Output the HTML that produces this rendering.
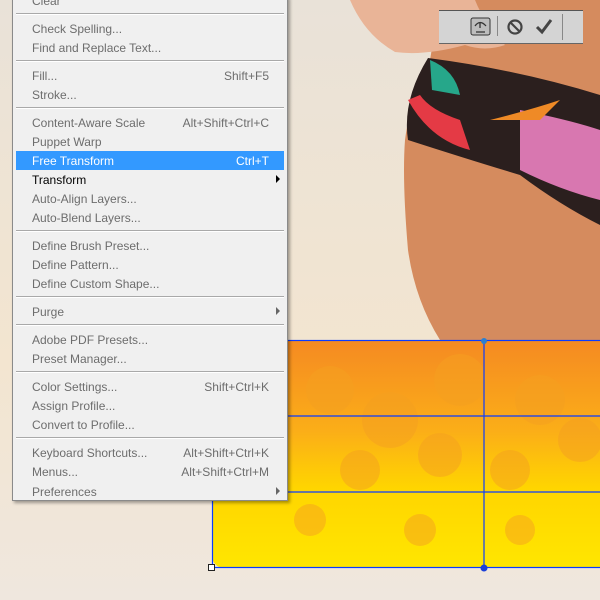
<!DOCTYPE html>
<html><head><meta charset="utf-8"><style>
body{margin:0;width:600px;height:600px;overflow:hidden;position:relative;background:#ede3d6;font-family:"Liberation Sans",sans-serif}
#menu{position:absolute;left:12px;top:-4px;width:274px;height:503px;background:#f0f0f0;border:1px solid #8a8a8a;box-shadow:2px 2px 3px rgba(0,0,0,.35)}
.i{position:absolute;left:19px;font-size:12px;color:#6d6d6d;white-space:nowrap;line-height:14px}
.k{position:absolute;right:18px;font-size:12px;color:#6d6d6d;line-height:14px}
.s{position:absolute;left:3px;right:3px;height:1px;background:#a9a9a9;border-bottom:1px solid #fff}
.ar{position:absolute;right:7px;width:0;height:0;border-left:4px solid #666;border-top:4px solid transparent;border-bottom:4px solid transparent}
</style></head><body>
<svg width="600" height="600" style="position:absolute;left:0;top:0">
<defs>
<linearGradient id="bg" x1="0" y1="0" x2="0" y2="1"><stop offset="0" stop-color="#e9e2d8"/><stop offset=".6" stop-color="#f3e5d0"/><stop offset="1" stop-color="#efe7de"/></linearGradient>
<linearGradient id="yl" x1="0" y1="0" x2="0" y2="1"><stop offset="0" stop-color="#f58a22"/><stop offset=".4" stop-color="#fbae18"/><stop offset=".65" stop-color="#ffd500"/><stop offset="1" stop-color="#ffe600"/></linearGradient>
</defs>
<rect width="600" height="600" fill="url(#bg)"/>
<path d="M440 0H600V340H440Q415 300 408 250Q402 180 405 140Q410 100 430 60Z" fill="#d58b5e"/>
<path d="M350 0H475Q485 25 505 45Q485 52 465 45Q425 56 395 52Q365 35 350 0Z" fill="#e9b497"/>
<path d="M428 58Q520 70 600 95V225Q560 205 520 175Q470 160 408 140Q402 100 428 58Z" fill="#2b1f1e"/>
<path d="M408 100Q430 140 470 150L460 120Q430 110 420 95Z" fill="#e43a45"/>
<path d="M520 110Q570 120 600 130V200Q560 190 520 170Z" fill="#d877b0"/>
<path d="M430 60Q455 70 460 95L432 90Z" fill="#26a78a"/>
<path d="M490 120Q530 110 560 100L540 120Z" fill="#ef8a26"/>
<rect x="212" y="340" width="420" height="228" rx="12" fill="url(#yl)"/>
<g fill="#f5a020" opacity=".5">
<circle cx="330" cy="390" r="24"/><circle cx="390" cy="420" r="28"/><circle cx="460" cy="380" r="26"/><circle cx="540" cy="400" r="25"/><circle cx="580" cy="440" r="22"/><circle cx="360" cy="470" r="20"/><circle cx="440" cy="455" r="22"/><circle cx="510" cy="470" r="20"/><circle cx="260" cy="480" r="18"/><circle cx="310" cy="520" r="16"/><circle cx="420" cy="530" r="16"/><circle cx="520" cy="530" r="15"/></g>
<g stroke="#0a3cff" stroke-width="1.2" fill="none"><rect x="212.5" y="340.5" width="400" height="227"/><line x1="212" y1="416" x2="600" y2="416"/><line x1="212" y1="492" x2="600" y2="492"/><line x1="484" y1="340" x2="484" y2="568"/></g>
<rect x="208.5" y="564.5" width="6" height="6" fill="#fff" stroke="#222"/>
<circle cx="484" cy="568" r="3.5" fill="#1a3fd8"/><circle cx="484" cy="341" r="3" fill="#2a7fd0"/>
<rect x="439" y="10" width="144" height="34" fill="#d4d4d4"/>
<line x1="439" y1="10.5" x2="583" y2="10.5" stroke="#555"/><line x1="439" y1="43.5" x2="583" y2="43.5" stroke="#666"/>
<rect x="471" y="18" width="19" height="17" rx="2" fill="#bdbdbd" stroke="#333"/>
<path d="M475 26Q480 19 486 26M480 22V28M476 32H485" stroke="#333" fill="none" stroke-width="1.3"/>
<line x1="497.5" y1="16" x2="497.5" y2="36" stroke="#888"/><line x1="562.5" y1="14" x2="562.5" y2="40" stroke="#888"/>
<circle cx="515" cy="27" r="6.5" fill="none" stroke="#444" stroke-width="2.2"/><line x1="510.5" y1="22.5" x2="519.5" y2="31.5" stroke="#444" stroke-width="2.2"/>
<path d="M537 27L542 32L551 20" stroke="#444" stroke-width="3" fill="none"/>
</svg>
<div id="menu">
<div class="i" style="top:-3px">Clear</div>
<div class="s" style="top:16px"></div>
<div class="i" style="top:25px">Check Spelling...</div>
<div class="i" style="top:44px">Find and Replace Text...</div>
<div class="s" style="top:63px"></div>
<div class="i" style="top:72px">Fill...</div><div class="k" style="top:72px">Shift+F5</div>
<div class="i" style="top:91px">Stroke...</div>
<div class="s" style="top:110px"></div>
<div class="i" style="top:119px">Content-Aware Scale</div><div class="k" style="top:119px">Alt+Shift+Ctrl+C</div>
<div class="i" style="top:138px">Puppet Warp</div>
<div style="position:absolute;left:3px;right:3px;top:154px;height:19px;background:#3399ff"></div>
<div class="i" style="top:157px;color:#fff">Free Transform</div><div class="k" style="top:157px;color:#fff">Ctrl+T</div>
<div class="i" style="top:176px;color:#000">Transform</div><div class="ar" style="top:178px;border-left-color:#000"></div>
<div class="i" style="top:195px">Auto-Align Layers...</div>
<div class="i" style="top:214px">Auto-Blend Layers...</div>
<div class="s" style="top:233px"></div>
<div class="i" style="top:242px">Define Brush Preset...</div>
<div class="i" style="top:261px">Define Pattern...</div>
<div class="i" style="top:280px">Define Custom Shape...</div>
<div class="s" style="top:299px"></div>
<div class="i" style="top:308px">Purge</div><div class="ar" style="top:310px"></div>
<div class="s" style="top:327px"></div>
<div class="i" style="top:336px">Adobe PDF Presets...</div>
<div class="i" style="top:355px">Preset Manager...</div>
<div class="s" style="top:374px"></div>
<div class="i" style="top:383px">Color Settings...</div><div class="k" style="top:383px">Shift+Ctrl+K</div>
<div class="i" style="top:402px">Assign Profile...</div>
<div class="i" style="top:421px">Convert to Profile...</div>
<div class="s" style="top:440px"></div>
<div class="i" style="top:449px">Keyboard Shortcuts...</div><div class="k" style="top:449px">Alt+Shift+Ctrl+K</div>
<div class="i" style="top:468px">Menus...</div><div class="k" style="top:468px">Alt+Shift+Ctrl+M</div>
<div class="i" style="top:488px">Preferences</div><div class="ar" style="top:490px"></div>
</div>
</body></html>
